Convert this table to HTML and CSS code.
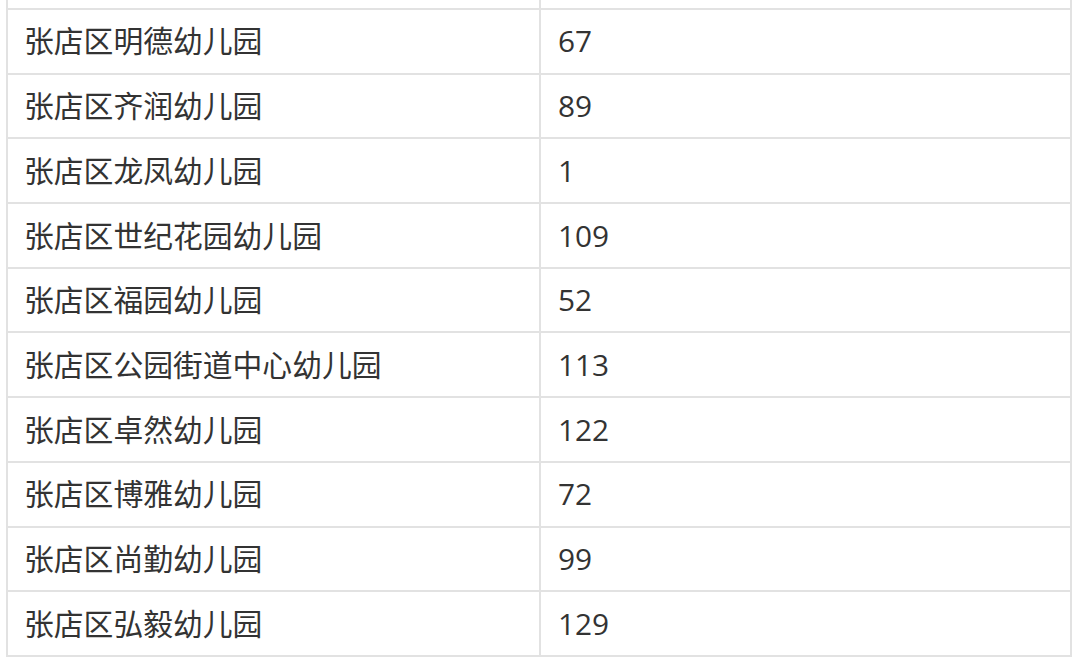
FILE: index.html
```html
<!DOCTYPE html>
<html lang="zh">
<head>
<meta charset="utf-8">
<link rel="stylesheet" href="styles.css">
</head>
<body>
<div class="table">
  <div class="row top"><div class="cell name"></div><div class="cell num"></div></div>
  <div class="row"><div class="cell name">张店区明德幼儿园</div><div class="cell num">67</div></div>
  <div class="row"><div class="cell name">张店区齐润幼儿园</div><div class="cell num">89</div></div>
  <div class="row"><div class="cell name">张店区龙凤幼儿园</div><div class="cell num">1</div></div>
  <div class="row"><div class="cell name">张店区世纪花园幼儿园</div><div class="cell num">109</div></div>
  <div class="row"><div class="cell name">张店区福园幼儿园</div><div class="cell num">52</div></div>
  <div class="row"><div class="cell name">张店区公园街道中心幼儿园</div><div class="cell num">113</div></div>
  <div class="row"><div class="cell name">张店区卓然幼儿园</div><div class="cell num">122</div></div>
  <div class="row"><div class="cell name">张店区博雅幼儿园</div><div class="cell num">72</div></div>
  <div class="row"><div class="cell name">张店区尚勤幼儿园</div><div class="cell num">99</div></div>
  <div class="row"><div class="cell name">张店区弘毅幼儿园</div><div class="cell num">129</div></div>
</div>
</body>
</html>
```
FILE: styles.css
```css
html, body {
  margin: 0;
  padding: 0;
  background: #ffffff;
}
body {
  font-family: "Open Sans", "Noto Sans CJK SC", sans-serif;
  font-size: 29.8px;
  color: #333333;
}
.table {
  margin-left: 6px;
  width: 1066px;
  border-left: 2px solid #e2e2e2;
  border-right: 2px solid #e2e2e2;
  box-sizing: border-box;
}
.row {
  display: flex;
  height: 64.7px;
  box-sizing: border-box;
  border-bottom: 2px solid #e2e2e2;
}
.row.top {
  height: 10px;
}
.cell {
  display: flex;
  align-items: center;
  box-sizing: border-box;
  padding: 0 16px;
  line-height: 1;
}
.cell.name {
  width: 533px;
  border-right: 2px solid #e2e2e2;
}
.cell.num {
  flex: 1;
  padding-left: 17px;
}
```
